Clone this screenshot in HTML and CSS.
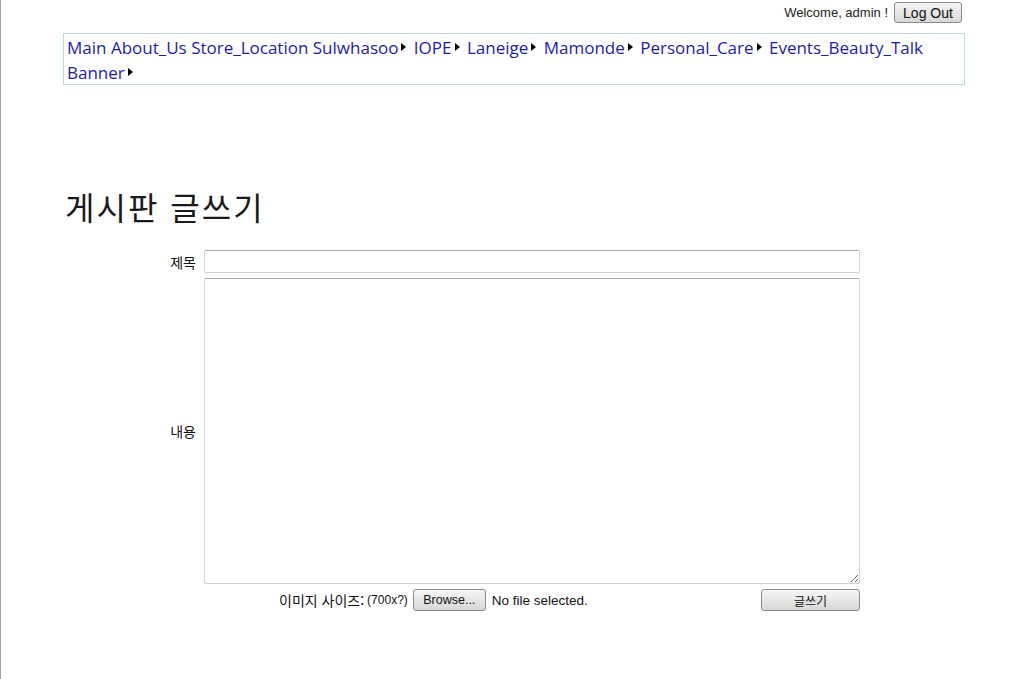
FILE: index.html
```html
<!DOCTYPE html>
<html lang="ko">
<head>
<meta charset="utf-8">
<title>게시판 글쓰기</title>
<link rel="stylesheet" href="styles.css">
</head>
<body>
<div class="page">
  <div class="topbar">
    <span class="welcome">Welcome, admin !</span>
    <button class="btn logout" type="button">Log Out</button>
  </div>
  <nav class="menu">
    <a href="#">Main</a>
    <a href="#">About_Us</a>
    <a href="#">Store_Location</a>
    <a href="#" class="sub">Sulwhasoo</a>
    <a href="#" class="sub">IOPE</a>
    <a href="#" class="sub">Laneige</a>
    <a href="#" class="sub">Mamonde</a>
    <a href="#" class="sub">Personal_Care</a>
    <a href="#">Events_Beauty_Talk</a>
    <a href="#" class="sub">Banner</a>
  </nav>
  <h1 class="title">게시판 글쓰기</h1>
  <form class="write">
    <div class="row">
      <label class="lbl">제목</label>
      <input class="field" type="text">
    </div>
    <div class="row row-content">
      <label class="lbl">내용</label>
      <textarea class="field area"></textarea>
    </div>
    <div class="row-bottom">
      <div class="upload">
        <span class="ko">이미지 사이즈:</span> <span class="small">(700x?)</span>
        <button class="btn browse" type="button">Browse...</button>
        <span class="nofile">No file selected.</span>
      </div>
      <button class="btn submit" type="button">글쓰기</button>
    </div>
  </form>
</div>
</body>
</html>
```
FILE: styles.css
```css
html, body {
  margin: 0;
  padding: 0;
  background: #fff;
}
body {
  font-family: "Liberation Sans", Arial, "Noto Sans CJK KR", sans-serif;
  color: #000;
}
.page {
  min-height: 679px;
  border-left: 1px solid #a0a0a0;
  box-sizing: border-box;
}
.topbar {
  display: flex;
  justify-content: flex-end;
  align-items: center;
  padding: 2px 62px 0 0;
  height: 21px;
}
.welcome {
  font-size: 13px;
  color: #222;
  margin-right: 6px;
}
.btn {
  font-family: "Liberation Sans", Arial, "Noto Sans CJK KR", sans-serif;
  border: 1px solid #8a8a8a;
  border-radius: 3px;
  background: linear-gradient(#f6f6f6, #e6e6e6 50%, #d8d8d8);
  color: #111;
  padding: 0;
  cursor: pointer;
}
.logout {
  width: 68px;
  height: 21px;
  font-size: 14px;
}
.menu {
  margin: 10px 0 0 62px;
  width: 902px;
  box-sizing: border-box;
  border: 1px solid #b8dbe8;
  padding: 1px 0 0 3px;
  height: 52px;
  line-height: 25px;
  font-family: "Open Sans", "Noto Sans", sans-serif;
  font-size: 17px;
}
.menu a {
  color: #1c1cab;
  text-decoration: none;
}
.menu a.sub {
  margin-right: 3px;
}
.menu a.sub::after {
  content: "";
  display: inline-block;
  width: 0;
  height: 0;
  border-top: 4px solid transparent;
  border-bottom: 4px solid transparent;
  border-left: 5px solid #000;
  margin-left: 3px;
  vertical-align: 3px;
}
.title {
  margin: 99px 0 0 64px;
  font-family: "Noto Sans CJK KR", sans-serif;
  font-weight: 400;
  font-size: 32px;
  line-height: 44px;
  color: #1a1a1a;
  letter-spacing: 2px;
}
.write {
  margin: 22px 0 0 0;
  width: 859px;
}
.row {
  display: flex;
  align-items: center;
  margin-bottom: 5px;
}
.lbl {
  width: 203px;
  flex: none;
  text-align: right;
  padding-right: 8px;
  box-sizing: border-box;
  font-family: "Noto Sans CJK KR", sans-serif;
  font-size: 14px;
  color: #111;
}
.field {
  flex: none;
  width: 656px;
  box-sizing: border-box;
  border: 1px solid #d2d2d2;
  border-top-color: #a8a8a8;
  border-radius: 2px;
  margin: 0;
  font-family: "Liberation Sans", Arial, sans-serif;
  font-size: 13px;
}
input.field {
  height: 23px;
}
.area {
  height: 306px;
  resize: both;
}
.row-bottom {
  display: flex;
  align-items: center;
  margin-top: 2px;
  height: 22px;
}
.upload {
  margin-left: 278px;
  display: flex;
  align-items: center;
  font-size: 13.5px;
  white-space: pre;
}
.ko {
  font-family: "Noto Sans CJK KR", sans-serif;
  font-size: 14px;
  color: #111;
}
.small {
  font-size: 12px;
  color: #111;
  margin-left: 3px;
}
.browse {
  width: 73px;
  height: 22px;
  font-size: 12.5px;
  margin-left: 5px;
}
.nofile {
  margin-left: 6px;
  font-size: 13.5px;
  color: #111;
}
.submit {
  margin-left: auto;
  width: 99px;
  height: 22px;
  font-family: "Noto Sans CJK KR", sans-serif;
  font-size: 12px;
}
```
